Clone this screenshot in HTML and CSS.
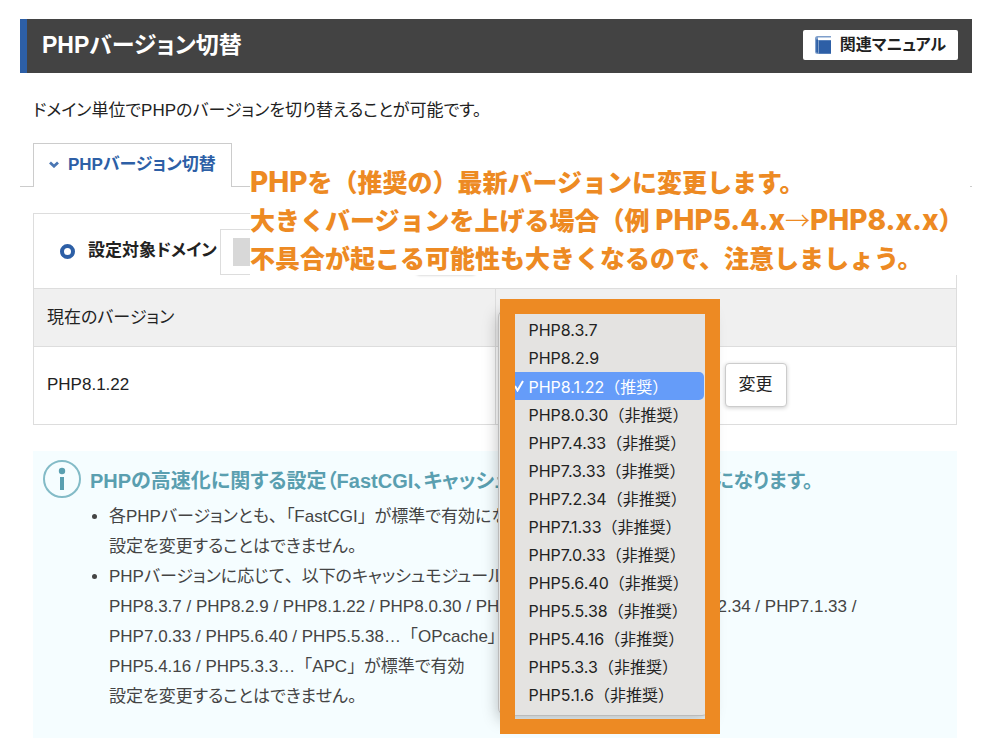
FILE: index.html
```html
<!DOCTYPE html>
<html lang="ja">
<head>
<meta charset="utf-8">
<title>PHPバージョン切替</title>
<link rel="stylesheet" href="styles.css">
</head>
<body>
<header class="titlebar">
  <h1 class="title">PHPバージョン切替</h1>
  <a class="manual" href="#manual">
    <svg class="manual-icon" width="16" height="18" viewBox="0 0 16 18" aria-hidden="true">
      <path d="M2.500 0H16V18H2.500Q0 18 0 15.500V2.500Q0 0 2.500 0Z" fill="#7f9fcb"/>
      <path d="M3 1.500H16V4H3Z" fill="#fff"/>
      <path d="M4 4.500H16V17.500H4Z" fill="#2d5fa6"/>
      <path d="M1.200 3.500H3V16.800H2.500Q1.200 16.800 1.200 15.500Z" fill="#2d5fa6"/>
    </svg>
    関連マニュアル
  </a>
</header>

<main>
  <p class="lead">ドメイン単位でPHPのバージョンを切り替えることが可能です。</p>

  <div class="workspace">
    <nav class="tabs">
      <a class="tab" href="#switch">
        <svg width="10" height="7" viewBox="0 0 10 7" aria-hidden="true"><path d="M1 1.500L5 5.200L9 1.500" fill="none" stroke="#4a76b3" stroke-width="2.800"/></svg>
        PHPバージョン切替
      </a>
    </nav>

    <form class="panel" id="switch">
      <div class="domain">
        <span class="ring"></span>
        <label class="domain-label" for="domain">設定対象ドメイン</label>
        <span class="domain-field"><input class="domain-input" id="domain" type="text"></span>
        <button class="domain-button" type="button" aria-label="設定"></button>
      </div>
      <table class="versions">
        <thead>
          <tr><th>現在のバージョン</th><th></th></tr>
        </thead>
        <tbody>
          <tr>
            <td>PHP8.1.22</td>
            <td class="change">
              <div class="picker">
                <select class="menu" size="14" aria-label="変更後のバージョン">
                  <option>PHP8.3.7</option>
                  <option>PHP8.2.9</option>
                  <option selected>PHP8.1.22（推奨）</option>
                  <option>PHP8.0.30（非推奨）</option>
                  <option>PHP7.4.33（非推奨）</option>
                  <option>PHP7.3.33（非推奨）</option>
                  <option>PHP7.2.34（非推奨）</option>
                  <option>PHP7.1.33（非推奨）</option>
                  <option>PHP7.0.33（非推奨）</option>
                  <option>PHP5.6.40（非推奨）</option>
                  <option>PHP5.5.38（非推奨）</option>
                  <option>PHP5.4.16（非推奨）</option>
                  <option>PHP5.3.3（非推奨）</option>
                  <option>PHP5.1.6（非推奨）</option>
                </select>
                <div class="frame"></div>
              </div>
              <button class="submit" type="button">変更</button>
            </td>
          </tr>
        </tbody>
      </table>
    </form>

    <p class="callout"><span class="latin">PHP</span>を（推奨の）最新バージョンに変更します。<br>大きくバージョンを上げる場合（例 <span class="latin">PHP5.4.x</span><span class="arrow">→</span><span class="latin">PHP8.x.x</span>）<br>不具合が起こる可能性も大きくなるので、注意しましょう。</p>
  </div>

  <section class="info">
    <div class="info-head">
      <svg class="info-icon" width="38" height="38" viewBox="0 0 38 38" aria-hidden="true">
        <circle cx="19" cy="19" r="18" fill="none" stroke="#83bbc7" stroke-width="2"/>
        <circle cx="19" cy="11" r="3.200" fill="#5a9fb0"/>
        <path d="M17 17H21V30H17Z" fill="#5a9fb0"/>
      </svg>
      <h2 class="info-title">PHPの高速化に関する設定（FastCGI、キャッシュモジュール）が標準有効になります。</h2>
    </div>
    <ul class="info-list">
      <li>各PHPバージョンとも<span class="wide">、</span>「FastCGI<span class="wide">」</span>が標準で有効になります。<br>設定を変更することはできません。</li>
      <li>PHPバージョンに応じて<span class="wide">、</span>以下のキャッシュモジュールが有効です。<br>PHP8.3.7 / PHP8.2.9 / PHP8.1.22 / PHP8.0.30 / PHP7.4.33 / PHP7.3.33 / PHP7.2.34 / PHP7.1.33 /<br>PHP7.0.33 / PHP5.6.40 / PHP5.5.38…<span class="wide">「</span>OPcache」<br>PHP5.4.16 / PHP5.3.3…<span class="wide">「</span>APC<span class="wide">」</span>が標準で有効<br>設定を変更することはできません。</li>
    </ul>
  </section>
</main>
</body>
</html>
```

FILE: styles.css
```css
* { box-sizing: border-box; }

body {
  margin: 0;
  padding: 19px 28px 12px 20px;
  background: #fff;
  color: #222;
  font: 17px/30px "Liberation Sans", "Noto Sans CJK JP", sans-serif;
  font-feature-settings: "palt";
}

.titlebar {
  display: flex;
  align-items: center;
  justify-content: space-between;
  height: 54px;
  padding: 0 14px 2px 15px;
  border-left: 7px solid #2d5fa6;
  background: #434343;
}

.title {
  margin: 0;
  color: #fff;
  font-size: 23px;
}

.manual {
  display: flex;
  align-items: center;
  gap: 9px;
  height: 30px;
  padding: 0 12px;
  border-radius: 2px;
  background: #fff;
  color: #222;
  font-size: 16px;
  font-weight: bold;
  text-decoration: none;
}

.lead { margin: 23px 13px 17px; }

.workspace { position: relative; }

.tabs {
  display: flex;
  height: 44px;
}

.tabs::before,
.tabs::after {
  content: "";
  width: 13px;
  border-bottom: 1px solid #ccc;
}

.tabs::after { flex: 1; }

.tab {
  display: flex;
  align-items: center;
  gap: 9px;
  padding: 0 15px 2px;
  border: 1px solid #ccc;
  border-bottom: 0;
  color: #2d5fa6;
  font-weight: bold;
  text-decoration: none;
}

.panel {
  margin: 26px 15px 0 13px;
  border: 1px solid #ddd;
}

.domain {
  display: flex;
  align-items: center;
  height: 74px;
  padding-left: 26px;
}

.ring {
  width: 15px;
  height: 15px;
  border: 4px solid #2d5fa6;
  border-radius: 50%;
}

.domain-label {
  margin: 0 3px 0 13px;
  font-weight: bold;
}

.domain-field {
  width: 192px;
  height: 46px;
  margin-top: 2px;
  padding: 8px 12px;
  border: 1px solid #ddd;
}

.domain-input {
  display: block;
  width: 100%;
  height: 28px;
  border: 0;
  background: #d8d8d8;
}

.domain-button {
  width: 60px;
  height: 44px;
  margin: 2px 0 0 4px;
  border: 0;
  border-radius: 4px;
  background: #fff;
  box-shadow: 0 1px 3px #bbb;
}

.versions {
  width: 100%;
  border-collapse: collapse;
  table-layout: fixed;
}

.versions th,
.versions td {
  width: 50%;
  height: 77px;
  padding: 0 13px;
  border-top: 1px solid #ddd;
  border-left: 1px solid #ddd;
  font-weight: normal;
  text-align: left;
}

.versions th {
  height: 58px;
  background: #f0f0f0;
}

.versions th:first-child,
.versions td:first-child { border-left: 0; }

.versions .change {
  position: relative;
  padding-left: 229px;
}

.submit {
  display: block;
  width: 62px;
  height: 44px;
  border: 1px solid #ccc;
  border-radius: 4px;
  background: #fff;
  box-shadow: 0 1px 4px #ccc;
  color: #222;
  font: inherit;
}

.picker {
  position: absolute;
  z-index: 2;
  top: -48px;
  left: 4px;
  width: 220px;
  height: 435px;
}

.menu {
  position: absolute;
  top: 10px;
  left: -2px;
  width: 212px;
  height: 407px;
  padding: 6px 5px;
  overflow: hidden;
  border: 1px solid #bbb;
  border-radius: 8px;
  outline: 0;
  background: #e4e3e1;
  box-shadow: 0 4px 16px #0004;
  color: #222;
  font: 16px/28px Inter, "Noto Sans CJK JP", sans-serif;
  font-feature-settings: normal;
}

.menu option {
  display: flex;
  align-items: center;
  height: 28px;
  min-height: 28px;
  padding: 0 0 0 25px;
  border-radius: 5px;
}

.menu option:checked {
  background: url("data:image/svg+xml,%3Csvg xmlns='http://www.w3.org/2000/svg' width='12' height='12'%3E%3Cpath d='M1 6L3.500 10.500L9 1' fill='none' stroke='white' stroke-width='2'/%3E%3C/svg%3E") 10px 8px no-repeat, linear-gradient(#659cf9, #659cf9);
  -webkit-text-fill-color: #fff;
}

.frame {
  position: absolute;
  inset: 0;
  border: 15px solid #ed8a23;
  pointer-events: none;
}

.callout {
  position: absolute;
  top: 19px;
  right: 2px;
  left: 230px;
  height: 113px;
  margin: 0;
  background: #fff;
  color: #ed8a23;
  font-family: "Noto Sans CJK JP", sans-serif;
  font-feature-settings: normal;
  font-size: 25px;
  font-weight: 900;
  line-height: 38px;
  white-space: nowrap;
}

.latin {
  font-family: Inter, sans-serif;
  font-size: 28px;
  font-weight: 800;
  line-height: 28px;
}

.arrow { font-weight: 300; }

.info {
  margin: 26px 15px 0 13px;
  padding: 9px 10px 26px;
  background: #f5fdff;
  color: #444;
}

.info-head {
  display: flex;
  align-items: center;
  gap: 9px;
  height: 42px;
}

.info-icon {
  flex: none;
  margin-bottom: 4px;
}

.info-title {
  margin: 0;
  overflow: hidden;
  color: #5a9fb0;
  font-size: 20px;
  white-space: nowrap;
}

.info-list {
  margin: 0;
  padding: 0 0 0 66px;
}

.info-list li { white-space: nowrap; }

.wide { font-feature-settings: normal; }
```
